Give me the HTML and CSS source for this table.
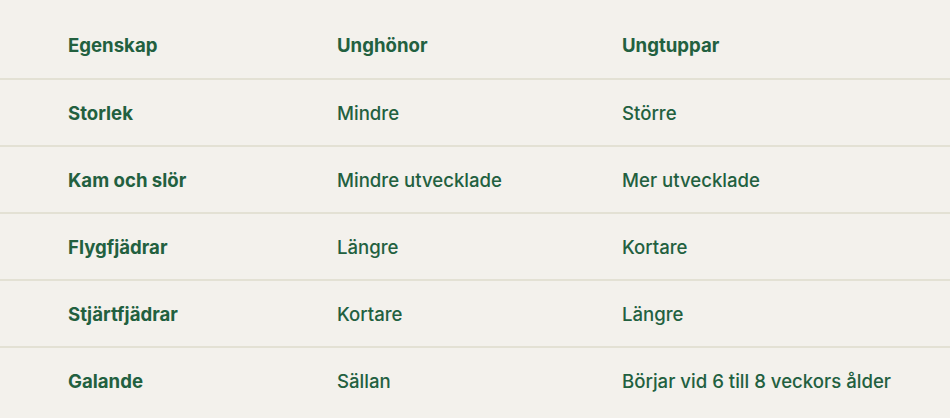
FILE: index.html
```html
<!DOCTYPE html>
<html lang="sv">
<head>
<meta charset="utf-8">
<link rel="stylesheet" href="styles.css">
</head>
<body>
<div class="table">
  <div class="row head">
    <div class="cell key">Egenskap</div>
    <div class="cell key">Unghönor</div>
    <div class="cell key">Ungtuppar</div>
  </div>
  <div class="row">
    <div class="cell key">Storlek</div>
    <div class="cell">Mindre</div>
    <div class="cell">Större</div>
  </div>
  <div class="row">
    <div class="cell key">Kam och slör</div>
    <div class="cell">Mindre utvecklade</div>
    <div class="cell">Mer utvecklade</div>
  </div>
  <div class="row">
    <div class="cell key">Flygfjädrar</div>
    <div class="cell">Längre</div>
    <div class="cell">Kortare</div>
  </div>
  <div class="row">
    <div class="cell key">Stjärtfjädrar</div>
    <div class="cell">Kortare</div>
    <div class="cell">Längre</div>
  </div>
  <div class="row last">
    <div class="cell key">Galande</div>
    <div class="cell">Sällan</div>
    <div class="cell">Börjar vid 6 till 8 veckors ålder</div>
  </div>
</div>
</body>
</html>
```
FILE: styles.css
```css
html, body {
  margin: 0;
  padding: 0;
  background: #f3f1ec;
}
body {
  font-family: "Inter", "Liberation Sans", sans-serif;
  color: #22603f;
  font-size: 18.6px;
}
.table {
  display: flex;
  flex-direction: column;
}
.row {
  display: grid;
  grid-template-columns: 269px 285px 1fr;
  height: 65px;
  align-items: center;
  border-bottom: 2px solid #e3e1d4;
}
.row.head {
  height: 78px;
  align-items: start;
}
.row.head .cell {
  padding-top: 33px;
}
.row.last {
  border-bottom: none;
}
.cell {
  padding-left: 68px;
  font-weight: 500;
  line-height: 24px;
}
.cell.key {
  font-weight: 700;
}
```
